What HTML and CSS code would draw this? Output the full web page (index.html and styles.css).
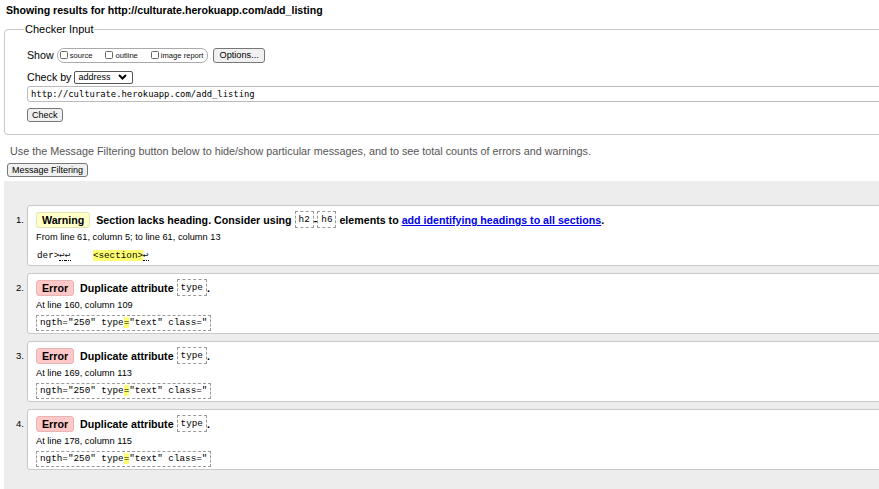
FILE: index.html
```html
<!DOCTYPE html>
<html>
<head>
<meta charset="utf-8">
<title>Nu Html Checker</title>
<link rel="stylesheet" href="styles.css">
</head>
<body>
<div class="page">
  <h2 class="results">Showing results for http://culturate.herokuapp.com/add_listing</h2>
  <fieldset class="checker">
    <legend>Checker Input</legend>
    <div class="row show-row">
      <span class="lbl">Show</span>
      <span class="opts">
        <label class="opt"><span class="cb"></span>source</label>
        <label class="opt"><span class="cb"></span>outline</label>
        <label class="opt"><span class="cb"></span>image report</label>
      </span>
      <button class="btn opt-btn">Options...</button>
    </div>
    <div class="row by-row">
      <span class="lbl">Check by</span>
      <span class="select">address
        <svg class="chev" width="9" height="6" viewBox="0 0 9 6"><polyline points="1,1 4.5,4.5 8,1" fill="none" stroke="#000" stroke-width="2"/></svg>
      </span>
    </div>
    <div class="urlbox">http://culturate.herokuapp.com/add_listing</div>
    <button class="btn check-btn">Check</button>
  </fieldset>
  <p class="hint">Use the Message Filtering button below to hide/show particular messages, and to see total counts of errors and warnings.</p>
  <button class="btn filter-btn">Message Filtering</button>
  <div class="area">
    <ol class="msgs">
      <li class="item">
        <span class="num">1.</span>
        <div class="msg">
          <p class="title"><strong class="badge warn">Warning</strong> <span>Section lacks heading. Consider using <code class="c">h2</code>-<code class="c">h6</code> elements to <a href="#">add identifying headings to all sections</a>.</span></p>
          <p class="loc">From line 61, column 5; to line 61, column 13</p>
          <p class="extract"><code class="x nobox">der&gt;<b class="lf">↩</b><b class="lf">↩</b>    <mark class="hl">&lt;section&gt;</mark><b class="lf">↩</b></code></p>
        </div>
      </li>
      <li class="item">
        <span class="num">2.</span>
        <div class="msg">
          <p class="title"><strong class="badge err">Error</strong> <span>Duplicate attribute <code class="c">type</code>.</span></p>
          <p class="loc">At line 160, column 109</p>
          <p class="extract"><code class="x">ngth="250" type<mark class="hl">=</mark>"text" class="</code></p>
        </div>
      </li>
      <li class="item">
        <span class="num">3.</span>
        <div class="msg">
          <p class="title"><strong class="badge err">Error</strong> <span>Duplicate attribute <code class="c">type</code>.</span></p>
          <p class="loc">At line 169, column 113</p>
          <p class="extract"><code class="x">ngth="250" type<mark class="hl">=</mark>"text" class="</code></p>
        </div>
      </li>
      <li class="item">
        <span class="num">4.</span>
        <div class="msg">
          <p class="title"><strong class="badge err">Error</strong> <span>Duplicate attribute <code class="c">type</code>.</span></p>
          <p class="loc">At line 178, column 115</p>
          <p class="extract"><code class="x">ngth="250" type<mark class="hl">=</mark>"text" class="</code></p>
        </div>
      </li>
    </ol>
  </div>
</div>
</body>
</html>
```
FILE: styles.css
```css
html { overflow: hidden; }
body {
  margin: 0;
  font-family: "Liberation Sans", Arial, sans-serif;
  color: #000;
  background: #fff;
}
.page {
  width: 1000px;
  padding-left: 4px;
}
.results {
  font-size: 10.6px;
  line-height: 14px;
  font-weight: bold;
  margin: 3px 0 0 2px;
}
.checker {
  margin: 6px 0 0 0;
  border: 1px solid #c8c8c8;
  border-radius: 4px;
  padding: 0 0 12px 22px;
  min-width: 0;
}
.checker legend {
  font-size: 11px;
  line-height: 13px;
  padding: 0 1px;
  margin-left: -3px;
}
.row {
  display: flex;
  align-items: center;
  font-size: 10.67px;
}
.show-row { margin-top: 11px; height: 16px; }
.by-row { margin-top: 7px; height: 14px; }
.lbl { margin-right: 3px; }
.by-row .lbl { margin-right: 3px; }
.opts {
  display: inline-flex;
  align-items: center;
  height: 15px;
  box-sizing: border-box;
  border: 1px solid #aaa;
  border-radius: 7px;
  padding: 0 4px 0 2px;
  gap: 13px;
}
.opt {
  display: inline-flex;
  align-items: center;
  font-size: 7.6px;
  color: #111;
}
.cb {
  width: 8px;
  height: 8px;
  box-sizing: border-box;
  border: 1px solid #666;
  border-radius: 1.5px;
  margin-right: 2px;
  background: #fff;
}
.btn {
  font-family: "Liberation Sans", Arial, sans-serif;
  font-size: 9px;
  line-height: 12px;
  height: 14px;
  padding: 0 4px;
  border: 1px solid #777;
  border-radius: 3px;
  background: #f0f0f0;
  color: #000;
  margin: 0;
}
.opt-btn { margin-left: 5px; height: 15px; padding: 0 5px; font-size: 9.2px; }
.select {
  display: inline-flex;
  align-items: center;
  justify-content: space-between;
  width: 59px;
  height: 13px;
  box-sizing: border-box;
  border: 1px solid #555;
  border-radius: 2px;
  font-size: 9px;
  padding: 0 5px 0 3px;
  background: #fff;
}
.urlbox {
  margin-top: 2px;
  height: 16px;
  box-sizing: border-box;
  border: 1px solid #bbb;
  border-radius: 3px;
  font-family: "DejaVu Sans Mono", monospace;
  font-size: 8.85px;
  line-height: 14px;
  padding: 0 3px;
}
.check-btn { margin-top: 6px; display: block; }
.hint {
  margin: 10px 0 0 6px;
  font-size: 10.8px;
  line-height: 13px;
  color: #555;
}
.filter-btn { margin: 5px 0 0 3px; display: block; }
.area {
  margin-top: 4px;
  background: #ededed;
  padding: 24px 0 40px 0;
}
.msgs {
  list-style: none;
  margin: 0;
  padding: 0;
  display: flex;
  flex-direction: column;
  gap: 7px;
}
.item { display: flex; align-items: flex-start; }
.num {
  width: 20px;
  text-align: right;
  font-size: 9.5px;
  line-height: 12px;
  padding-top: 9px;
  margin-right: 3px;
  flex: none;
  color: #000;
}
.msg {
  flex: 1;
  height: 61px;
  box-sizing: border-box;
  background: #fff;
  border: 1px solid #c8c8c8;
  border-radius: 3px 0 0 3px;
  padding: 6px 8px 0 8px;
}
.msg p { margin: 0; }
.title {
  font-size: 10.67px;
  line-height: 16px;
  height: 16px;
  font-weight: bold;
  white-space: nowrap;
}
.badge {
  display: inline-block;
  height: 16px;
  box-sizing: border-box;
  line-height: 14px;
  padding: 0 5px;
  border-radius: 3px;
  vertical-align: top;
  margin-right: 3px;
}
.warn { background: #ffffc8; border: 1px solid #e4e4b4; }
.err { background: #ffc8c8; border: 1px solid #e8b4b4; }
.c {
  display: inline-block;
  font-family: "Liberation Mono", "DejaVu Sans Mono", monospace;
  font-weight: normal;
  font-size: 9.3px;
  line-height: 13px;
  padding: 1px 3px;
  border: 1px dashed #999;
  vertical-align: top;
  margin-top: -1px;
}
.title a { color: #0000ee; text-decoration: underline; }
.loc {
  margin-top: 3px !important;
  font-size: 9.25px;
  line-height: 12px;
}
.extract { margin-top: 4px !important; display: flex; }
.x {
  display: block;
  font-family: "Liberation Mono", "DejaVu Sans Mono", monospace;
  font-size: 9.3px;
  line-height: 12px;
  padding: 1px 3px;
  border: 1px dashed #999;
  white-space: pre;
}
.x.nobox { border-color: transparent; padding-left: 0; }
.hl { background: #ffff70; color: #000; }
.lf {
  font-weight: normal;
  border-bottom: 1px dotted #000;
  font-family: "DejaVu Sans Mono", monospace;
  font-size: 9.3px;
  line-height: 12px;
}
```
